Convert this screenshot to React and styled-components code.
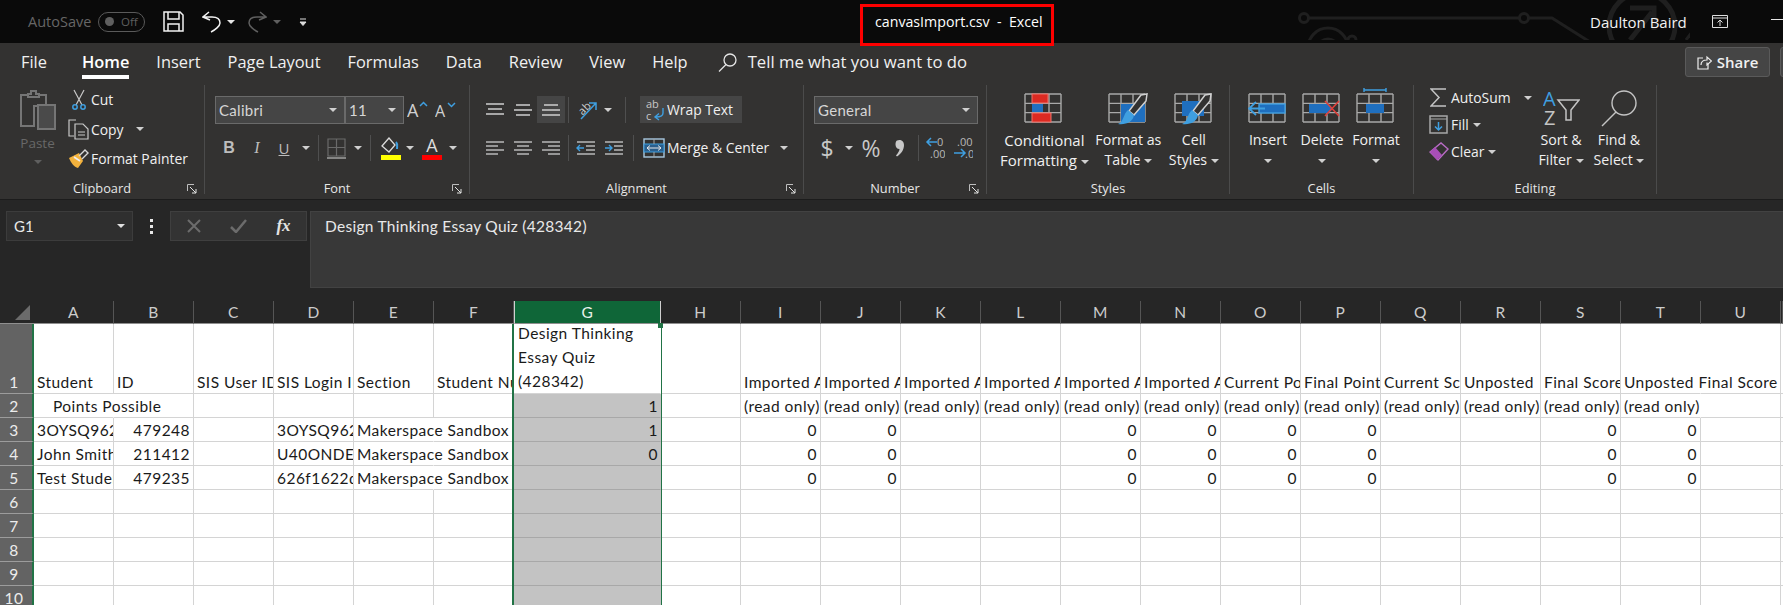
import React from "react";
import styled, { createGlobalStyle } from "styled-components";

const ui = `"Open Sans", "Noto Sans", sans-serif`;
const sheetFont = `Lato, "Open Sans", sans-serif`;

const GlobalStyle = createGlobalStyle`
  html, body { margin: 0; padding: 0; background: #ffffff; }
  * { box-sizing: border-box; }
`;

const Page = styled.div`
  width: 1783px;
  height: 605px;
  overflow: hidden;
  display: flex;
  flex-direction: column;
  font-family: ${ui};
`;

/* title bar */
const TitleBar = styled.div`
  position: relative;
  flex: 0 0 43px;
  display: flex;
  align-items: center;
  padding-left: 28px;
  background: #0a0a0a;
  color: #f2f2f2;
  font-size: 13px;
`;
const Circuit = styled.svg`
  position: absolute;
  left: 1290px;
  top: 0;
`;
const AutoSave = styled.span`
  width: 70px;
  color: #666;
  font-size: 14.5px;
`;
const Toggle = styled.div`
  width: 47px;
  height: 20px;
  border: 1px solid #5a5a5a;
  border-radius: 10px;
  display: flex;
  align-items: center;
  padding-left: 6px;
  gap: 7px;
  color: #5f5f5f;
  font-size: 11.5px;
  margin-right: 18px;
  &::before {
    content: "";
    width: 9px;
    height: 9px;
    border-radius: 50%;
    background: #5f5f5f;
  }
`;
const TitleBox = styled.div`
  position: absolute;
  left: 860px;
  top: 4px;
  width: 194px;
  height: 42px;
  border: 3px solid #fe0000;
  z-index: 3;
  padding: 5px 0 0 12px;
  white-space: pre;
  font-size: 14.2px;
  color: #fff;
`;
const UserName = styled.span`
  position: absolute;
  left: 1590px;
  top: 12px;
  font-size: 15px;
`;
const TitleIcons = styled.div`
  position: absolute;
  left: 1712px;
  top: 15px;
  display: flex;
  gap: 43px;
  align-items: center;
`;
const MinLine = styled.i`
  width: 14px;
  height: 1px;
  background: #e6e6e6;
  margin-top: -5px;
`;

/* tabs */
const TabsRow = styled.div`
  flex: 0 0 40px;
  background: #333231;
  display: flex;
  align-items: flex-start;
  padding-left: 21px;
  color: #f0f0f0;
  position: relative;
`;
const Tab = styled.div`
  height: 36px;
  margin-right: ${(p) => p.$mr || 27}px;
  padding-top: 8px;
  font-size: 16.4px;
  line-height: 22px;
  font-weight: ${(p) => (p.$active ? 600 : 400)};
  color: ${(p) => (p.$active ? "#fff" : "#f0f0f0")};
  border-bottom: ${(p) => (p.$active ? "4px solid #fff" : "4px solid transparent")};
`;
const TellMe = styled.div`
  display: flex;
  align-items: center;
  gap: 11px;
  margin-left: 3px;
  padding-top: 8px;
  font-size: 16.7px;
  line-height: 22px;
`;
const ShareButton = styled.div`
  position: absolute;
  left: 1685px;
  top: 4px;
  width: 85px;
  height: 30px;
  background: #454545;
  border: 1px solid #5a5a5a;
  border-radius: 3px;
  display: flex;
  align-items: center;
  justify-content: center;
  gap: 5px;
  font-size: 15px;
  font-weight: 600;
`;
const CoverButton = styled.div`
  position: absolute;
  left: 1780px;
  top: 4px;
  width: 30px;
  height: 30px;
  background: #454545;
  border: 1px solid #5a5a5a;
  border-radius: 3px;
`;

/* ribbon */
const Ribbon = styled.div`
  flex: 0 0 117px;
  background: #333231;
  border-bottom: 1px solid #1c1c1c;
  display: flex;
  padding-top: 2px;
  color: #f0f0f0;
  font-size: 13.9px;
`;
const Group = styled.div`
  position: relative;
  flex: 0 0 ${(p) => p.$w}px;
  height: 109px;
  border-right: 1px solid #4b4b4b;
  display: flex;
  flex-direction: column;
`;
const GroupBody = styled.div`
  flex: 0 0 96px;
  padding-left: ${(p) => p.$pl || 0}px;
  display: ${(p) => (p.$col ? "block" : "flex")};
`;
const GroupLabel = styled.div`
  height: 13px;
  line-height: 15px;
  text-align: center;
  font-size: 12.8px;
  color: #e6e6e6;
`;
const Launcher = styled.svg`
  position: absolute;
  right: 7px;
  bottom: 0;
`;
const ToolRow = styled.div`
  display: flex;
  align-items: center;
  height: ${(p) => p.$h || 28}px;
  margin-top: ${(p) => p.$mt || 0}px;
`;
const Slot = styled.div`
  flex: 0 0 ${(p) => p.$w}px;
  height: 27px;
  display: flex;
  align-items: center;
  justify-content: center;
  background: ${(p) => (p.$on ? "#454545" : "transparent")};
  color: ${(p) => p.$c || "#d8d8d8"};
  font-size: ${(p) => p.$fs || 14}px;
  font-family: ${(p) => p.$ff || "inherit"};
  font-weight: ${(p) => p.$fw || 400};
  font-style: ${(p) => p.$it || "normal"};
  text-decoration: ${(p) => (p.$under ? "underline" : "none")};
`;
const Sep = styled.i`
  flex: 0 0 1px;
  height: 26px;
  background: #4f4f4f;
  margin: 0 ${(p) => p.$m || 3}px;
`;
const Caret = styled.i`
  display: inline-block;
  flex: none;
  width: 0;
  height: 0;
  border-left: 4px solid transparent;
  border-right: 4px solid transparent;
  border-top: 4px solid ${(p) => p.$c || "#d0d0d0"};
  margin-left: ${(p) => p.$ml || 0}px;
  margin-right: ${(p) => p.$mr || 0}px;
  margin-top: ${(p) => p.$mt || 0}px;
  vertical-align: middle;
`;
const SmallColumn = styled.div`
  flex: 0 0 ${(p) => p.$w}px;
  display: flex;
  flex-direction: column;
  margin-top: ${(p) => p.$mt || 0}px;
`;
const SmallCmd = styled.div`
  height: ${(p) => p.$h || 29.5}px;
  display: flex;
  align-items: center;
  gap: 2px;
  white-space: nowrap;
`;
const IconHold = styled.span`
  flex: 0 0 ${(p) => p.$w}px;
  display: flex;
  justify-content: center;
`;
const PasteButton = styled.div`
  flex: 0 0 68px;
  display: flex;
  flex-direction: column;
  align-items: center;
  padding: 5px 0 0 7px;
  color: #686868;
  font-size: 13.5px;
  line-height: 18px;
`;
const PasteLabel = styled.span`
  margin-top: 4px;
`;
const Combo = styled.div`
  width: ${(p) => p.$w}px;
  height: 28px;
  background: #454545;
  border: 1px solid #6a6a6a;
  display: flex;
  align-items: center;
  justify-content: space-between;
  padding: 0 7px 0 3px;
  color: #d6d6d6;
  font-family: ${sheetFont};
  font-size: 15px;
  letter-spacing: 0.3px;
`;
const WrapBox = styled.div`
  width: 102px;
  height: 27px;
  background: #454545;
  display: flex;
  align-items: center;
  gap: 1px;
  padding-left: 6px;
  margin-left: 1px;
`;
const MergeBox = styled.div`
  display: flex;
  align-items: center;
  gap: 2px;
  margin-left: 4px;
  white-space: nowrap;
`;
const BigButton = styled.div`
  flex: 0 0 ${(p) => p.$w}px;
  display: flex;
  flex-direction: column;
  align-items: center;
  text-align: center;
`;
const BigIcon = styled.div`
  height: 45px;
  display: flex;
  align-items: center;
`;
const BigLine = styled.div`
  height: 20px;
  line-height: 20px;
  white-space: nowrap;
  font-size: ${(p) => p.$fs || 14.2}px;
`;

/* formula bar */
const FormulaBar = styled.div`
  flex: 0 0 101px;
  background: #262626;
  display: flex;
  padding: 11px 0 0 6px;
  color: #e8e8e8;
`;
const NameBox = styled.div`
  width: 127px;
  height: 30px;
  background: #2f2f2f;
  border: 1px solid #3c3c3c;
  display: flex;
  align-items: center;
  justify-content: space-between;
  padding: 0 7px;
  font-family: ${sheetFont};
  font-size: 15px;
`;
const Dots = styled.div`
  width: 37px;
  display: flex;
  flex-direction: column;
  align-items: center;
  justify-content: center;
  gap: 3px;
  height: 30px;
  & i {
    width: 3px;
    height: 3px;
    background: #e8e8e8;
  }
`;
const FxBox = styled.div`
  width: 137px;
  height: 30px;
  background: #333;
  border: 1px solid #3f3f3f;
  display: flex;
  align-items: center;
  margin-right: 3px;
`;
const FxSlot = styled.div`
  width: 45px;
  display: flex;
  justify-content: center;
  color: #e4e4e4;
  font-family: "Liberation Serif", serif;
  font-style: italic;
  font-weight: 700;
  font-size: 17px;
`;
const FormulaInput = styled.div`
  flex: 1;
  height: 77px;
  background: #383838;
  border: 1px solid #424242;
  border-right: 0;
  padding: 4px 14px;
  font-family: ${sheetFont};
  font-size: 15.5px;
  letter-spacing: 0.28px;
  line-height: 20px;
`;

/* sheet */
const Sheet = styled.div`
  flex: 1;
  display: grid;
  grid-template-columns: 34px repeat(6, 80px) 147px repeat(14, 80px) 2px;
  grid-template-rows: 23px 70px repeat(9, 24px);
  background: #fff;
  font-family: ${sheetFont};
  font-size: 15.5px;
  letter-spacing: 0.45px;
  color: #1a1a1a;
`;
const Corner = styled.div`
  background: #262626;
  border-bottom: 1px solid #8f8f8f;
  display: flex;
  align-items: flex-end;
  justify-content: flex-end;
  padding: 0 4px 3px 0;
  &::after {
    content: "";
    border-left: 15px solid transparent;
    border-bottom: 15px solid #6b6b6b;
  }
`;
const ColHead = styled.div`
  background: ${(p) => (p.$sel ? "#0f6638" : "#262626")};
  color: ${(p) => (p.$sel ? "#e8f2ec" : "#cccccc")};
  border-right: 1px solid ${(p) => (p.$sel ? "#cfcfcf" : "#555")};
  border-left: ${(p) => (p.$sel ? "1px solid #cfcfcf" : "0")};
  border-bottom: 1px solid #8f8f8f;
  display: flex;
  align-items: center;
  justify-content: center;
  font-size: 15.5px;
`;
const RowHead = styled.div`
  background: #636363;
  color: #ececec;
  border-bottom: 1px solid #9c9c9c;
  border-right: 2px solid #217346;
  display: flex;
  align-items: flex-end;
  justify-content: center;
  padding: 0 4px 1px 0;
  font-size: 15.5px;
  line-height: 20px;
`;
const Cell = styled.div`
  position: relative;
  z-index: ${(p) => (p.$g ? 2 : 0)};
  overflow: ${(p) => (p.$over ? "visible" : "hidden")};
  white-space: nowrap;
  border-bottom: 1px solid ${(p) => (p.$g && !p.$active ? "#a8a8a8" : "#d4d4d4")};
  border-right: 1px solid ${(p) => (p.$over || p.$g ? "transparent" : "#d4d4d4")};
  background: ${(p) => (p.$g && !p.$active ? "#c3c3c3" : "transparent")};
  box-shadow: ${(p) => (p.$g ? "-2px 0 0 #217346, 1px 0 0 #217346" : "none")};
  padding: 0 ${(p) => (p.$g ? 2 : 3)}px 0 ${(p) => (p.$indent ? 19 : p.$g ? 4 : 3)}px;
  display: flex;
  align-items: flex-end;
  justify-content: ${(p) => (p.$num ? "flex-end" : "flex-start")};
  line-height: 21px;
`;
const Handle = styled.i`
  position: absolute;
  right: -3px;
  top: -1px;
  width: 5px;
  height: 5px;
  background: #217346;
`;
const WrapText = styled.div`
  line-height: 24px;
  white-space: normal;
  width: 130px;
`;

/* icons */
const grey = "#a9a9a9";
const blue = "#1f6fbf";
const lightBlue = "#3f9fe0";

const Bars = ({ lines, h = 14, w = 20, c = "#cfcfcf", children }) => (
  <svg width={w} height={h} viewBox={`0 0 ${w} ${h}`}>
    {lines.map(([a, b, y], i) => (
      <line key={i} x1={a} x2={b} y1={y} y2={y} stroke={c} strokeWidth="1.5" />
    ))}
    {children}
  </svg>
);

const SheetIcon = ({ w = 36, h = 28, fills = [], children }) => {
  const cols = [0, w / 3, (2 * w) / 3, w];
  const rows = [0, h / 3, (2 * h) / 3, h];
  return (
    <svg width={w + 4} height={h + 12} viewBox={`-1 -6 ${w + 4} ${h + 12}`}>
      {cols.map((x) => (
        <line key={x} x1={x} x2={x} y1="0" y2={h} stroke={grey} strokeWidth="1.4" />
      ))}
      {rows.map((y) => (
        <line key={y} y1={y} y2={y} x1="0" x2={w} stroke={grey} strokeWidth="1.4" />
      ))}
      {fills.map(([x, y, fw, fh, col, edge], i) => (
        <rect key={i} x={x} y={y} width={fw} height={fh} fill={col} stroke={edge || "none"} />
      ))}
      {children}
    </svg>
  );
};

const Brush = ({ x = 0, y = 0 }) => (
  <g transform={`translate(${x} ${y})`}>
    <path d="M24 -14 L30 -15 L29 -8 L17 6 L12 2 Z" fill="#333231" stroke="#d0d0d0" strokeWidth="1.5" />
    <path d="M11 1 L17 6 C16 13 9 16 1 15 C7 13 6 5 11 1 Z" fill={lightBlue} />
  </g>
);

const Launch = () => (
  <Launcher width="10" height="10" viewBox="0 0 10 10">
    <path d="M0.5 7V0.5H7" fill="none" stroke="#bdbdbd" />
    <path d="M3 3L9 9M9 5V9H5" fill="none" stroke="#e4e4e4" />
  </Launcher>
);

const CircuitArt = () => (
  <Circuit width="400" height="40" viewBox="0 0 400 40">
    <g fill="none" stroke="#1f1f1f" strokeWidth="3">
      <circle cx="14" cy="18" r="4.5" />
      <path d="M19 18H229" />
      <circle cx="234" cy="18" r="4.5" />
      <path d="M239 18H262L300 42" />
      <circle cx="38" cy="48" r="20" />
      <circle cx="38" cy="50" r="11" />
      <circle cx="62" cy="40" r="4" />
      <circle cx="352" cy="26" r="33" strokeWidth="5" />
      <path d="M340 40L362 12M340 8H364V30" strokeWidth="5" />
      <path d="M396 40L420 8" />
    </g>
  </Circuit>
);

const RibbonDisplayIcon = () => (
  <svg width="16" height="13" viewBox="0 0 16 13">
    <path d="M0.5 0.5H15.5V12.5H0.5ZM0.5 3H15.5" fill="none" stroke="#ddd" />
    <path d="M8 11V5M5.5 7.5L8 5L10.5 7.5" fill="none" stroke="#ddd" />
  </svg>
);
const SaveIcon = () => (
  <svg width="21" height="21" viewBox="0 0 21 21" style={{ marginRight: 18 }}>
    <path d="M1 1H17L20 4V20H1Z" fill="none" stroke="#f2f2f2" strokeWidth="1.5" />
    <path d="M5 1V8H16V1M5 20V13H16V20" fill="none" stroke="#f2f2f2" strokeWidth="1.5" />
  </svg>
);
const UndoIcon = ({ c = "#f2f2f2", flip }) => (
  <svg width="19" height="22" viewBox="0 0 19 22" style={{ transform: flip ? "scaleX(-1)" : "none", marginRight: 6 }}>
    <path d="M7 1L1 6L8 9M1 6H10C16 6 18 9 18 12C18 15 13 19 9 21" fill="none" stroke={c} strokeWidth="1.5" />
  </svg>
);
const SearchIcon = ({ size = 19, c = "#e6e6e6", sw = 1.3 }) => (
  <svg width={size} height={size} viewBox="0 0 19 19">
    <circle cx="12" cy="7" r="6" fill="none" stroke={c} strokeWidth={sw} />
    <path d="M8 11.5L1 18.5" stroke={c} strokeWidth={sw} />
  </svg>
);
const ShareIcon = () => (
  <svg width="15" height="15" viewBox="0 0 15 15">
    <path d="M6 3H1V14H11V9" fill="none" stroke="#eee" strokeWidth="1.2" />
    <path d="M4 10C4 6 7 5 10 5V2L14.5 6L10 10V7.5" fill="none" stroke="#eee" strokeWidth="1.2" />
  </svg>
);
const PasteIcon = () => (
  <svg width="36" height="40" viewBox="0 0 36 40">
    <path d="M8 5H1V36H14V16H26V5H19" fill="none" stroke="#757575" strokeWidth="2" />
    <path d="M8 7V4H11V1H16V4H19V7Z" fill="none" stroke="#757575" strokeWidth="2" />
    <rect x="18" y="15" width="17" height="24" fill="#4a4a4a" stroke="#757575" strokeWidth="2" />
  </svg>
);
const CutIcon = () => (
  <svg width="14" height="22" viewBox="0 0 14 22">
    <path d="M2 1L10 16M12 1L4 16" stroke="#c8c8c8" strokeWidth="1.2" />
    <circle cx="3" cy="18" r="2.2" fill="none" stroke={lightBlue} strokeWidth="1.5" />
    <circle cx="11" cy="18" r="2.2" fill="none" stroke={lightBlue} strokeWidth="1.5" />
  </svg>
);
const CopyIcon = () => (
  <svg width="21" height="21" viewBox="0 0 21 21">
    <path d="M8 1H1V17H6" fill="none" stroke="#c8c8c8" strokeWidth="1.2" />
    <path d="M7 5H15L20 10V20H7Z" fill="none" stroke="#c8c8c8" strokeWidth="1.2" />
    <path d="M10 13H17M10 16H17" stroke="#c8c8c8" />
  </svg>
);
const PainterIcon = () => (
  <svg width="21" height="20" viewBox="0 0 21 20">
    <path d="M1 9L11 4L15 12L10 19C6 18 3 14 1 9Z" fill="#f3b23d" />
    <path d="M11 7L17 1L20 4L14 10" fill="none" stroke="#d8d8d8" strokeWidth="1.4" />
    <path d="M6 8L12 12" stroke="#eee" strokeWidth="1.6" />
  </svg>
);
const BordersIcon = () => (
  <svg width="19" height="21" viewBox="0 0 19 21">
    <path d="M1 1H18V18H1ZM9.5 1V18M1 9.5H18" fill="none" stroke="#6a6a6a" strokeWidth="1.2" />
    <path d="M0 20H19" stroke="#9a9a9a" strokeWidth="1.6" />
  </svg>
);
const FillIcon = () => (
  <svg width="21" height="23" viewBox="0 0 21 23">
    <path d="M9 1L2 9L9 15L15 8Z" fill="none" stroke="#dcdcdc" strokeWidth="1.3" />
    <path d="M16 5C18 7 17 10 17 12" fill="none" stroke={lightBlue} strokeWidth="2" />
    <rect x="1" y="18" width="20" height="5" fill="#ffff00" />
  </svg>
);
const FontColorIcon = () => (
  <svg width="20" height="23" viewBox="0 0 20 23">
    <text x="10" y="15" textAnchor="middle" fontSize="18" fontFamily="Open Sans" fill="#dcdcdc">A</text>
    <rect y="18" width="20" height="5" fill="#fe0000" />
  </svg>
);
const GrowIcon = ({ size, up }) => (
  <svg width="22" height="20" viewBox="0 0 22 20">
    <text x="0" y="17" fontSize={size} fontFamily="Open Sans" fill="#d0d0d0">A</text>
    <path d={up ? "M13 6L16.5 2.5L20 6" : "M13 3L16.5 6.5L20 3"} fill="none" stroke={lightBlue} strokeWidth="1.5" />
  </svg>
);
const OrientIcon = () => (
  <svg width="20" height="20" viewBox="0 0 20 20">
    <text x="1" y="13" transform="rotate(-45 6 10)" fontSize="11" fontFamily="Open Sans" fill="#d0d0d0">ab</text>
    <path d="M3 19L18 3M11 3H18V10" fill="none" stroke={lightBlue} strokeWidth="1.5" />
  </svg>
);
const WrapIcon = () => (
  <svg width="20" height="23" viewBox="0 0 20 23">
    <text x="0" y="10" fontSize="11" fontFamily="Open Sans" fill="#c8c8c8">ab</text>
    <text x="0" y="22" fontSize="11" fontFamily="Open Sans" fill="#c8c8c8">c</text>
    <path d="M17 10V15C17 18 14 19 10 19M13 15.5L9 19L13 22" fill="none" stroke={lightBlue} strokeWidth="1.4" />
  </svg>
);
const MergeIcon = () => (
  <svg width="22" height="20" viewBox="0 0 22 20">
    <rect x="1" y="1" width="20" height="18" fill="none" stroke="#a8c8e0" strokeWidth="1.4" />
    <rect x="1" y="6" width="20" height="8" fill="#2b5f8c" stroke={lightBlue} />
    <path d="M4 10H18M7 7.5L4 10L7 12.5M15 7.5L18 10L15 12.5" fill="none" stroke="#e8e8e8" />
    <path d="M11 1V6M11 14V19" stroke="#a8a8a8" />
  </svg>
);
const CommaIcon = () => (
  <svg width="10" height="18" viewBox="0 0 10 18">
    <path d="M2 1.5C5 0 9 1.5 9 6C9 11 6 15 2 17.5L1 16.5C3 14 4.5 12 4.5 10C2 10 0.5 8 0.5 5.5C0.5 3.5 1 2 2 1.5Z" fill="#c8c8c8" />
  </svg>
);
const DecimalIcon = ({ inc }) => (
  <svg width="20" height="22" viewBox="0 0 20 22" fontSize="11" fontFamily="Open Sans" fill="#b8b8b8">
    {inc ? (
      <>
        <text x="4" y="9">.00</text>
        <text x="12" y="21">.0</text>
        <path d="M1 16H12M8 12L12 16L8 20" fill="none" stroke={lightBlue} strokeWidth="1.5" />
      </>
    ) : (
      <>
        <text x="12" y="9">0</text>
        <text x="5" y="21">.00</text>
        <path d="M12 5H2M6 1L2 5L6 9" fill="none" stroke={lightBlue} strokeWidth="1.5" />
      </>
    )}
  </svg>
);
const ConditionalIcon = () => (
  <SheetIcon
    fills={[
      [7, 0, 16, 9, "#dc2a22", "#f0736b"],
      [7, 10, 11, 8, blue],
      [7, 19, 19, 9, "#dc2a22", "#f0736b"],
    ]}
  />
);
const TableIcon = () => (
  <SheetIcon fills={[[12, 10, 24, 18, blue]]}>
    <Brush x="8" y="15" />
  </SheetIcon>
);
const CellStyleIcon = () => (
  <SheetIcon fills={[[7, 7, 22, 15, blue]]}>
    <Brush x="6" y="15" />
  </SheetIcon>
);
const InsertIcon = () => (
  <SheetIcon fills={[[10, 10, 26, 9, blue]]}>
    <rect x="10" y="10" width="26" height="9" fill="none" stroke={lightBlue} strokeWidth="1.4" />
    <path d="M16 14.5H0M7 8L0 14.5L7 21" fill="none" stroke={lightBlue} strokeWidth="1.8" />
  </SheetIcon>
);
const DeleteIcon = () => (
  <SheetIcon fills={[[6, 10, 18, 9, blue]]}>
    <path d="M24 8L30 14.5L24 21" fill={blue} />
    <path d="M22 7L36 22M36 7L22 22" stroke="#e0403a" strokeWidth="1.6" />
  </SheetIcon>
);
const FormatIcon = () => (
  <SheetIcon fills={[[9, 10, 18, 9, blue]]}>
    <path d="M7 -4H29M7 -6V-2M29 -6V-2" stroke={lightBlue} strokeWidth="1.4" fill="none" />
  </SheetIcon>
);
const SumIcon = () => (
  <svg width="17" height="19" viewBox="0 0 17 19">
    <path d="M16 1H1L9 9.5L1 18H16" fill="none" stroke="#c4c4c4" strokeWidth="1.5" />
  </svg>
);
const FillDownIcon = () => (
  <svg width="19" height="19" viewBox="0 0 19 19">
    <rect x="1" y="1" width="17" height="17" fill="none" stroke="#a8a8a8" strokeWidth="1.5" />
    <path d="M1 4H18" stroke="#a8a8a8" />
    <path d="M9.5 7V15M6 11.5L9.5 15L13 11.5" fill="none" stroke={lightBlue} strokeWidth="1.5" />
  </svg>
);
const ClearIcon = () => (
  <svg width="20" height="20" viewBox="0 0 20 20">
    <path d="M1 10L6 15L9 18L19 7L12 1Z" fill="none" stroke="#b86cc4" strokeWidth="1.4" />
    <path d="M1 10L6 5L13 13L8 18Z" fill="#a84eb8" />
  </svg>
);
const SortIcon = () => (
  <svg width="37" height="37" viewBox="0 0 37 37" fontFamily="Open Sans" fontSize="20">
    <text x="0" y="17" fill={lightBlue}>A</text>
    <text x="1" y="36" fill="#c4c4c4">Z</text>
    <path d="M15 11H36L28 21V31H23V21Z" fill="none" stroke="#c4c4c4" strokeWidth="1.5" />
  </svg>
);

/* data */
const colNames = "ABCDEFGHIJKLMNOPQRSTU".split("");

const over = (t, extra = {}) => ({ t, over: true, ...extra });
const ro = "(read only)";
const zeros = (keys, v = 0) => Object.fromEntries(keys.map((k) => [k, v]));
const zeroCols = ["I", "J", "M", "N", "O", "P", "S", "T"];

const sheetRows = [
  {
    A: "Student",
    B: "ID",
    C: "SIS User ID",
    D: "SIS Login ID",
    E: "Section",
    F: "Student Number",
    ...zeros(["I", "J", "K", "L", "M", "N"], "Imported A"),
    O: "Current Points",
    P: "Final Points",
    Q: "Current Score",
    R: "Unposted",
    S: "Final Score",
    T: over("Unposted Final Score"),
  },
  {
    A: over("Points Possible", { indent: true }),
    G: 1,
    ...zeros(["I", "J", "K", "L", "M", "N", "O", "P", "Q", "R", "S"], ro),
    T: over(ro),
  },
  { A: "3OYSQ962", B: 479248, D: "3OYSQ962", E: over("Makerspace Sandbox"), G: 1, ...zeros(zeroCols) },
  { A: "John Smith", B: 211412, D: "U40ONDEF", E: over("Makerspace Sandbox"), G: 0, ...zeros(zeroCols) },
  { A: "Test Student", B: 479235, D: "626f1622d", E: over("Makerspace Sandbox"), ...zeros(zeroCols) },
  {},
  {},
  {},
  {},
  {},
];

function SheetCell({ col, row, value }) {
  const isG = col === "G";
  const active = isG && row === 0;
  const obj = value !== null && typeof value === "object" ? value : null;
  const text = obj ? obj.t : value;
  return (
    <Cell
      $g={isG}
      $active={active}
      $over={active || (obj && obj.over)}
      $indent={obj && obj.indent}
      $num={typeof value === "number"}
    >
      {active ? (
        <>
          <WrapText>Design Thinking Essay Quiz (428342)</WrapText>
          <Handle />
        </>
      ) : (
        text
      )}
    </Cell>
  );
}

function TitleSection() {
  return (
    <TitleBar>
      <CircuitArt />
      <AutoSave>AutoSave</AutoSave>
      <Toggle>Off</Toggle>
      <SaveIcon />
      <UndoIcon />
      <Caret $c="#e6e6e6" $mr={13} />
      <UndoIcon c="#5f5f5f" flip />
      <Caret $c="#5f5f5f" $mr={18} />
      <svg width="8" height="8" viewBox="0 0 8 8">
        <path d="M1 1H7M1 4H7L4 7.5Z" stroke="#ddd" fill="#ddd" strokeWidth="1" />
      </svg>
      <TitleBox>{"canvasImport.csv  -  Excel"}</TitleBox>
      <UserName>Daulton Baird</UserName>
      <TitleIcons>
        <RibbonDisplayIcon />
        <MinLine />
      </TitleIcons>
    </TitleBar>
  );
}

function TabsSection() {
  return (
    <TabsRow>
      <Tab $mr={35}>File</Tab>
      <Tab $active>Home</Tab>
      <Tab>Insert</Tab>
      <Tab>Page Layout</Tab>
      <Tab>Formulas</Tab>
      <Tab>Data</Tab>
      <Tab>Review</Tab>
      <Tab>View</Tab>
      <Tab>Help</Tab>
      <TellMe>
        <SearchIcon />
        Tell me what you want to do
      </TellMe>
      <ShareButton>
        <ShareIcon />
        Share
      </ShareButton>
      <CoverButton />
    </TabsRow>
  );
}

const V = ({ y }) => (
  <Bars
    lines={y === "top" ? [[1, 19, 1], [3, 17, 6], [1, 19, 11]] : y === "mid" ? [[3, 17, 2], [1, 19, 7], [3, 17, 12]] : [[3, 17, 2], [1, 19, 7], [1, 19, 12]]}
  />
);
const H = ({ a }) => {
  const s = a === "left" ? [[1, 19, 1], [1, 13, 5], [1, 19, 9], [1, 13, 13]] : a === "center" ? [[1, 19, 1], [4, 16, 5], [1, 19, 9], [4, 16, 13]] : [[1, 19, 1], [7, 19, 5], [1, 19, 9], [7, 19, 13]];
  return <Bars lines={s} c="#b8b8b8" />;
};
const IndentIcon = ({ inc }) => (
  <Bars lines={[[1, 19, 1], [10, 19, 5], [10, 19, 9], [1, 19, 13]]} c="#b8b8b8">
    {inc ? (
      <path d="M1 7H8M5 4L8 7L5 10" fill="none" stroke={lightBlue} strokeWidth="1.4" />
    ) : (
      <path d="M8 7H1M4 4L1 7L4 10" fill="none" stroke={lightBlue} strokeWidth="1.4" />
    )}
  </Bars>
);

function RibbonSection() {
  return (
    <Ribbon>
      <Group $w={205}>
        <GroupBody>
          <PasteButton>
            <PasteIcon />
            <PasteLabel>Paste</PasteLabel>
            <Caret $c="#5f5f5f" $mt={8} />
          </PasteButton>
          <SmallColumn $w={130}>
            <SmallCmd>
              <IconHold $w={21}>
                <CutIcon />
              </IconHold>
              Cut
            </SmallCmd>
            <SmallCmd>
              <IconHold $w={21}>
                <CopyIcon />
              </IconHold>
              Copy
              <Caret $ml={10} />
            </SmallCmd>
            <SmallCmd>
              <IconHold $w={21}>
                <PainterIcon />
              </IconHold>
              Format Painter
            </SmallCmd>
          </SmallColumn>
        </GroupBody>
        <GroupLabel>Clipboard</GroupLabel>
        <Launch />
      </Group>

      <Group $w={265}>
        <GroupBody $pl={10} $col>
          <ToolRow $mt={11}>
            <Combo $w={130}>
              Calibri
              <Caret />
            </Combo>
            <Combo $w={59}>
              11
              <Caret />
            </Combo>
            <Slot $w={28}>
              <GrowIcon size={18} up />
            </Slot>
            <Slot $w={28}>
              <GrowIcon size={16} />
            </Slot>
          </ToolRow>
          <ToolRow $mt={10}>
            <Slot $w={28} $fw={700} $c="#bdbdbd" $ff="Liberation Sans" $fs={16}>
              B
            </Slot>
            <Slot $w={28} $it="italic" $c="#bdbdbd" $ff="Liberation Serif" $fs={16}>
              I
            </Slot>
            <Slot $w={26} $c="#bdbdbd" $fs={15} $under>
              U
            </Slot>
            <Slot $w={18}>
              <Caret />
            </Slot>
            <Sep />
            <Slot $w={29}>
              <BordersIcon />
            </Slot>
            <Slot $w={14}>
              <Caret />
            </Slot>
            <Sep $m={5} />
            <Slot $w={29}>
              <FillIcon />
            </Slot>
            <Slot $w={10}>
              <Caret />
            </Slot>
            <Slot $w={34}>
              <FontColorIcon />
            </Slot>
            <Slot $w={8}>
              <Caret />
            </Slot>
          </ToolRow>
        </GroupBody>
        <GroupLabel>Font</GroupLabel>
        <Launch />
      </Group>

      <Group $w={334}>
        <GroupBody $pl={11} $col>
          <ToolRow $mt={11} $h={27}>
            <Slot $w={28}><V y="top" /></Slot>
            <Slot $w={28}><V y="mid" /></Slot>
            <Slot $w={28} $on><V y="bot" /></Slot>
            <Sep />
            <Slot $w={31}><OrientIcon /></Slot>
            <Slot $w={9}><Caret /></Slot>
            <Sep $m={13} />
            <WrapBox>
              <WrapIcon />
              Wrap Text
            </WrapBox>
          </ToolRow>
          <ToolRow $mt={11} $h={27}>
            <Slot $w={28}><H a="left" /></Slot>
            <Slot $w={28}><H a="center" /></Slot>
            <Slot $w={28}><H a="right" /></Slot>
            <Sep />
            <Slot $w={28}><IndentIcon /></Slot>
            <Slot $w={28}><IndentIcon inc /></Slot>
            <Sep $m={5} />
            <MergeBox>
              <MergeIcon />
              Merge & Center
              <Caret $ml={9} />
            </MergeBox>
          </ToolRow>
        </GroupBody>
        <GroupLabel>Alignment</GroupLabel>
        <Launch />
      </Group>

      <Group $w={183}>
        <GroupBody $pl={10} $col>
          <ToolRow $mt={11}>
            <Combo $w={164}>
              General
              <Caret />
            </Combo>
          </ToolRow>
          <ToolRow $mt={10}>
            <Slot $w={26} $fs={23} $c="#c8c8c8">$</Slot>
            <Slot $w={18}><Caret /></Slot>
            <Slot $w={26} $fs={23} $c="#c8c8c8">%</Slot>
            <Slot $w={32}><CommaIcon /></Slot>
            <Sep $m={2} />
            <Slot $w={28}><DecimalIcon /></Slot>
            <Slot $w={28}><DecimalIcon inc /></Slot>
          </ToolRow>
        </GroupBody>
        <GroupLabel>Number</GroupLabel>
        <Launch />
      </Group>

      <Group $w={243}>
        <GroupBody $pl={13}>
          <BigButton $w={85}>
            <BigIcon><ConditionalIcon /></BigIcon>
            <BigLine $fs={15}>Conditional</BigLine>
            <BigLine $fs={15}>Formatting <Caret /></BigLine>
          </BigButton>
          <BigButton $w={79}>
            <BigIcon><TableIcon /></BigIcon>
            <BigLine>Format as</BigLine>
            <BigLine>Table <Caret /></BigLine>
          </BigButton>
          <BigButton $w={52}>
            <BigIcon><CellStyleIcon /></BigIcon>
            <BigLine>Cell</BigLine>
            <BigLine>Styles <Caret /></BigLine>
          </BigButton>
        </GroupBody>
        <GroupLabel>Styles</GroupLabel>
      </Group>

      <Group $w={184}>
        <GroupBody $pl={11}>
          <BigButton $w={54}>
            <BigIcon><InsertIcon /></BigIcon>
            <BigLine>Insert</BigLine>
            <BigLine><Caret /></BigLine>
          </BigButton>
          <BigButton $w={54}>
            <BigIcon><DeleteIcon /></BigIcon>
            <BigLine>Delete</BigLine>
            <BigLine><Caret /></BigLine>
          </BigButton>
          <BigButton $w={54}>
            <BigIcon><FormatIcon /></BigIcon>
            <BigLine>Format</BigLine>
            <BigLine><Caret /></BigLine>
          </BigButton>
        </GroupBody>
        <GroupLabel>Cells</GroupLabel>
      </Group>

      <Group $w={243}>
        <GroupBody $pl={14}>
          <SmallColumn $w={104} $mt={-1}>
            <SmallCmd $h={27}>
              <IconHold $w={21}><SumIcon /></IconHold>
              AutoSum
              <Caret $ml={11} />
            </SmallCmd>
            <SmallCmd $h={27}>
              <IconHold $w={21}><FillDownIcon /></IconHold>
              Fill
              <Caret $ml={2} />
            </SmallCmd>
            <SmallCmd $h={27}>
              <IconHold $w={21}><ClearIcon /></IconHold>
              Clear
              <Caret $ml={2} />
            </SmallCmd>
          </SmallColumn>
          <BigButton $w={58}>
            <BigIcon><SortIcon /></BigIcon>
            <BigLine>Sort &</BigLine>
            <BigLine>Filter <Caret /></BigLine>
          </BigButton>
          <BigButton $w={58}>
            <BigIcon><SearchIcon size={38} c="#c4c4c4" sw={0.7} /></BigIcon>
            <BigLine>Find &</BigLine>
            <BigLine>Select <Caret /></BigLine>
          </BigButton>
        </GroupBody>
        <GroupLabel>Editing</GroupLabel>
      </Group>
    </Ribbon>
  );
}

function FormulaSection() {
  return (
    <FormulaBar>
      <NameBox>
        G1
        <Caret $c="#e0e0e0" />
      </NameBox>
      <Dots>
        <i />
        <i />
        <i />
      </Dots>
      <FxBox>
        <FxSlot>
          <svg width="16" height="14" viewBox="0 0 16 14">
            <path d="M2 1L14 13M14 1L2 13" stroke="#6c6c6c" strokeWidth="2" />
          </svg>
        </FxSlot>
        <FxSlot>
          <svg width="17" height="14" viewBox="0 0 17 14">
            <path d="M1 8L6 13L16 1" fill="none" stroke="#6c6c6c" strokeWidth="2.5" />
          </svg>
        </FxSlot>
        <FxSlot>fx</FxSlot>
      </FxBox>
      <FormulaInput>Design Thinking Essay Quiz (428342)</FormulaInput>
    </FormulaBar>
  );
}

export default function App() {
  return (
    <Page>
      <GlobalStyle />
      <TitleSection />
      <TabsSection />
      <RibbonSection />
      <FormulaSection />
      <Sheet>
        <Corner />
        {colNames.map((c) => (
          <ColHead key={c} $sel={c === "G"}>
            {c}
          </ColHead>
        ))}
        <ColHead />
        {sheetRows.map((row, i) => (
          <React.Fragment key={i}>
            <RowHead>{i + 1}</RowHead>
            {colNames.map((c) => (
              <SheetCell key={c} col={c} row={i} value={row[c] ?? ""} />
            ))}
            <Cell />
          </React.Fragment>
        ))}
      </Sheet>
    </Page>
  );
}
